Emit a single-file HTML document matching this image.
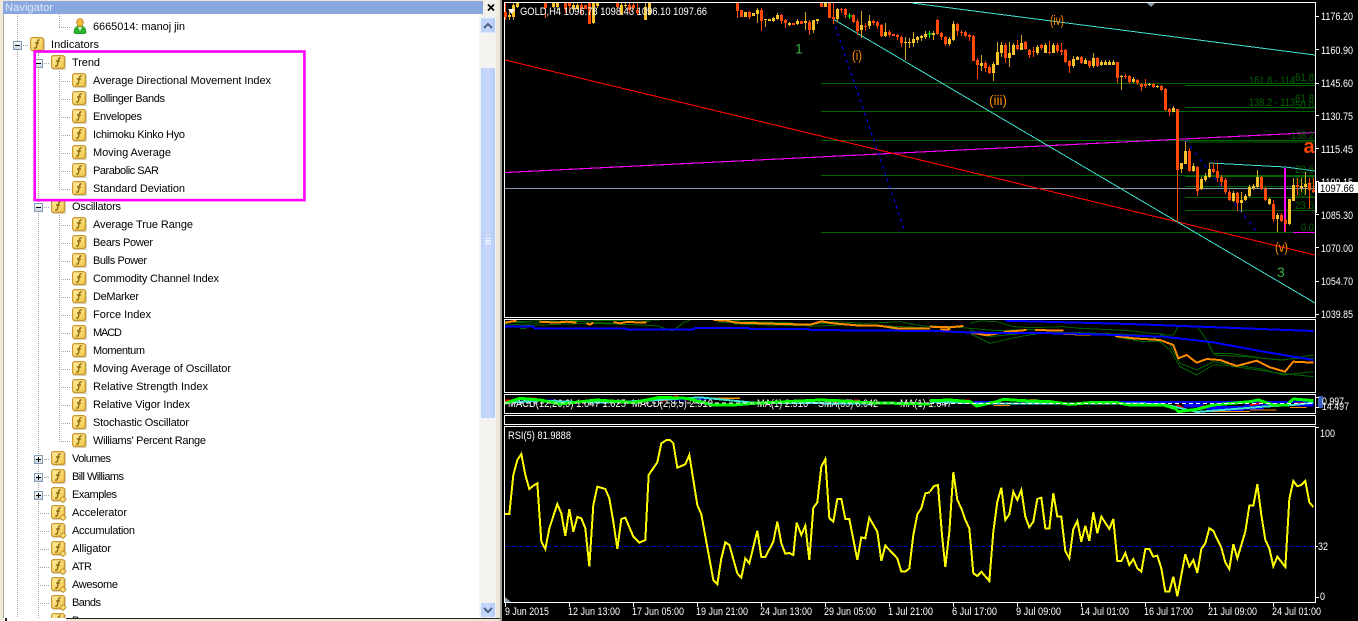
<!DOCTYPE html>
<html><head><meta charset="utf-8"><title>Navigator and GOLD,H4 chart</title>
<style>
html,body{margin:0;padding:0;background:#000;width:1358px;height:621px;overflow:hidden}
svg{display:block;position:absolute;left:0;top:0}
text{font-family:"Liberation Sans",sans-serif;font-size:11px}
.t text{fill:#000}
.w text{fill:#fff}
.g text{fill:#006400}
.o text{fill:#ff8c00;font-size:14px}
.c{shape-rendering:crispEdges;fill:none}
</style></head><body>
<svg width="1358" height="621" viewBox="0 0 1358 621" xmlns="http://www.w3.org/2000/svg">
<defs>
<linearGradient id="gy" x1="0" y1="0" x2="1" y2="1"><stop offset="0" stop-color="#fff0a0"/><stop offset="1" stop-color="#f2c648"/></linearGradient>
<linearGradient id="gb" x1="0" y1="0" x2="0" y2="1"><stop offset="0" stop-color="#fff"/><stop offset="1" stop-color="#c9cfd8"/></linearGradient>
<linearGradient id="sb" x1="0" y1="0" x2="1" y2="0"><stop offset="0" stop-color="#bcd0fa"/><stop offset=".5" stop-color="#c8d8fb"/><stop offset="1" stop-color="#b4c9f5"/></linearGradient>
<symbol id="f" width="17" height="17" overflow="visible">
<rect x="1" y="1" width="14" height="14" rx="2" fill="#d8d2c0"/>
<rect x=".6" y=".6" width="12.800" height="12.800" rx="2" fill="url(#gy)" stroke="#c8952e" stroke-width="1.200"/>
<path d="M9.800 3C8 2.600 7.600 3.600 7.300 5.200L6.500 9.600C6.200 11.300 5.400 11.400 4.100 10.900M5 6H9" fill="none" stroke="#8f6d18" stroke-width="1.400"/>
</symbol>
<symbol id="d" width="17" height="17" overflow="visible">
<use href="#f"/>
<path d="M12 9.500l3 3-3 3-3-3z" fill="#fde27a" stroke="#c8952e"/>
</symbol>
<symbol id="m" width="9" height="9"><rect x=".5" y=".5" width="8" height="8" fill="url(#gb)" stroke="#7f9db9"/><path d="M2 4.500H7" stroke="#000" class="c"/></symbol>
<symbol id="p" width="9" height="9"><rect x=".5" y=".5" width="8" height="8" fill="url(#gb)" stroke="#7f9db9"/><path d="M2 4.500H7M4.500 2V7" stroke="#000" class="c"/></symbol>
<clipPath id="c2"><rect x="505" y="395" width="810" height="18"/></clipPath>
<clipPath id="c1"><rect x="505" y="320" width="810" height="72"/></clipPath>
</defs>

<!-- LEFT PANEL -->
<rect x="0" y="0" width="503" height="621" fill="#ece9d8"/>
<rect x="3" y="14" width="476" height="607" fill="#fff"/>
<rect x="3" y="14" width="1" height="607" fill="#a8a8a0"/>
<rect x="3" y="1" width="480" height="13" fill="#8aa8e0"/>
<rect x="483" y="0" width="14" height="16" fill="#f2f1ea"/>
<text x="5" y="11" fill="#dde7f8" textLength="48" lengthAdjust="spacingAndGlyphs">Navigator</text>
<path d="M488 4.500l6 6M494 4.500l-6 6" stroke="#000" stroke-width="1.700"/>

<!-- tree lines -->
<g class="c" stroke="#a0a0a0" stroke-dasharray="1 1">
<path d="M17.500 14V618M38.500 53V618M59.500 14V27M59.500 71V189M59.500 215V441"/>
<path d="M59 27.500H71M17 45.500H28M38 63.500H49M38 207.500H49M38 459.500H49M38 477.500H49M38 495.500H49M38 513.500H49M38 531.500H49M38 549.500H49M38 567.500H49M38 585.500H49M38 603.500H49"/>
<path d="M59 81.500H71M59 99.500H71M59 117.500H71M59 135.500H71M59 153.500H71M59 171.500H71M59 189.500H71M59 225.500H71M59 243.500H71M59 261.500H71M59 279.500H71M59 297.500H71M59 315.500H71M59 333.500H71M59 351.500H71M59 369.500H71M59 387.500H71M59 405.500H71M59 423.500H71M59 441.500H71"/>
</g>
<use href="#m" x="13" y="41"/><use href="#m" x="34" y="59"/><use href="#m" x="34" y="203"/>
<use href="#p" x="34" y="455"/><use href="#p" x="34" y="473"/><use href="#p" x="34" y="491"/>

<!-- account icon -->
<path d="M74 33c0-5 2-7 6-7s6 2 6 7c-3 1-9 1-12 0z" fill="#2fb52f" stroke="#1c8a1c" stroke-width=".7"/>
<ellipse cx="80" cy="22.500" rx="3.300" ry="4" fill="#f3b93a" stroke="#b8801c" stroke-width=".8"/>
<path d="M78 27l2 4 2-4" fill="#e6f5e0"/>

<!-- icons -->
<use href="#f" x="30" y="37"/>
<use href="#f" x="51" y="55"/><use href="#f" x="51" y="199"/><use href="#f" x="51" y="451"/><use href="#f" x="51" y="469"/>
<use href="#d" x="51" y="487"/><use href="#d" x="51" y="505"/><use href="#d" x="51" y="523"/><use href="#d" x="51" y="541"/><use href="#d" x="51" y="559"/><use href="#d" x="51" y="577"/><use href="#d" x="51" y="595"/><use href="#d" x="51" y="613"/>
<use href="#f" x="72" y="73"/><use href="#f" x="72" y="91"/><use href="#f" x="72" y="109"/><use href="#f" x="72" y="127"/><use href="#f" x="72" y="145"/><use href="#f" x="72" y="163"/><use href="#f" x="72" y="181"/>
<use href="#f" x="72" y="217"/><use href="#f" x="72" y="235"/><use href="#f" x="72" y="253"/><use href="#f" x="72" y="271"/><use href="#f" x="72" y="289"/><use href="#f" x="72" y="307"/><use href="#f" x="72" y="325"/><use href="#f" x="72" y="343"/><use href="#f" x="72" y="361"/><use href="#f" x="72" y="379"/><use href="#f" x="72" y="397"/><use href="#f" x="72" y="415"/><use href="#f" x="72" y="433"/>

<!-- tree text -->
<g class="t">
<text x="93" y="30" textLength="92">6665014: manoj jin</text>
<text x="51" y="48" textLength="48">Indicators</text>
<text x="72" y="66" textLength="28">Trend</text>
<text x="93" y="84" textLength="178">Average Directional Movement Index</text>
<text x="93" y="102" textLength="72">Bollinger Bands</text>
<text x="93" y="120" textLength="49">Envelopes</text>
<text x="93" y="138" textLength="92">Ichimoku Kinko Hyo</text>
<text x="93" y="156" textLength="78">Moving Average</text>
<text x="93" y="174" textLength="66">Parabolic SAR</text>
<text x="93" y="192" textLength="92">Standard Deviation</text>
<text x="72" y="210" textLength="49">Oscillators</text>
<text x="93" y="228" textLength="100">Average True Range</text>
<text x="93" y="246" textLength="60">Bears Power</text>
<text x="93" y="264" textLength="54">Bulls Power</text>
<text x="93" y="282" textLength="126">Commodity Channel Index</text>
<text x="93" y="300" textLength="46">DeMarker</text>
<text x="93" y="318" textLength="58">Force Index</text>
<text x="93" y="336" textLength="29">MACD</text>
<text x="93" y="354" textLength="52">Momentum</text>
<text x="93" y="372" textLength="138">Moving Average of Oscillator</text>
<text x="93" y="390" textLength="115">Relative Strength Index</text>
<text x="93" y="408" textLength="97">Relative Vigor Index</text>
<text x="93" y="426" textLength="96">Stochastic Oscillator</text>
<text x="93" y="444" textLength="113">Williams' Percent Range</text>
<text x="72" y="462" textLength="39">Volumes</text>
<text x="72" y="480" textLength="52">Bill Williams</text>
<text x="72" y="498" textLength="45">Examples</text>
<text x="72" y="516" textLength="55">Accelerator</text>
<text x="72" y="534" textLength="63">Accumulation</text>
<text x="72" y="552" textLength="39">Alligator</text>
<text x="72" y="570" textLength="20">ATR</text>
<text x="72" y="588" textLength="46">Awesome</text>
<text x="72" y="606" textLength="29">Bands</text>
<text x="72" y="624" textLength="27">Bears</text>
</g>
<!-- magenta box -->
<rect x="34.700" y="51.500" width="269.700" height="148.600" fill="none" stroke="#ff00ff" stroke-width="2.600"/>

<!-- bottom strip -->
<rect x="3" y="618" width="63" height="3" fill="#fff"/>
<rect x="66" y="619" width="434" height="2" fill="#ece9d8"/>
<rect x="66" y="618" width="434" height="1" fill="#222"/>
<rect x="5" y="618" width="2" height="3" fill="#222"/>

<!-- scrollbar -->
<rect x="479" y="14" width="17" height="604" fill="#f4f3ee"/>
<rect x="480.500" y="17.500" width="15" height="15.500" rx="2" fill="url(#sb)" stroke="#eef3fd"/>
<path d="M484 28l4-4 4 4" fill="none" stroke="#4d6185" stroke-width="2"/>
<rect x="480.500" y="67.500" width="15" height="351" rx="2" fill="url(#sb)" stroke="#eef3fd"/>
<path class="c" d="M485 238.500h6M485 240.500h6M485 242.500h6M485 244.500h6" stroke="#eef3fd"/>
<rect x="480.500" y="602.500" width="15" height="15" rx="2" fill="url(#sb)" stroke="#eef3fd"/>
<path d="M484 608l4 4 4-4" fill="none" stroke="#4d6185" stroke-width="2"/>
<!-- splitter -->
<rect x="500" y="0" width="2" height="621" fill="#a0a09a"/>
<rect x="502" y="0" width="856" height="621" fill="#000"/>

<!-- CHART FRAMES -->
<g fill="#fff">
<rect x="504" y="2" width="812" height="1"/>
<rect x="504" y="2" width="1" height="601"/>
<rect x="1315" y="2" width="1" height="601"/>
<rect x="504" y="317" width="812" height="1"/>
<rect x="504" y="319" width="812" height="1"/>
<rect x="504" y="392" width="812" height="1"/>
<rect x="504" y="394" width="812" height="1"/>
<rect x="504" y="413" width="812" height="1"/>
<rect x="504" y="415" width="812" height="1"/>
<rect x="504" y="424" width="812" height="1"/>
<rect x="504" y="426" width="812" height="1"/>
<rect x="504" y="602" width="812" height="1"/>
</g>
<rect x="504" y="318" width="1" height="1" fill="#000"/>
<rect x="504" y="393" width="1" height="1" fill="#000"/>
<rect x="504" y="414" width="1" height="1" fill="#000"/>
<rect x="504" y="425" width="1" height="1" fill="#000"/>
<rect x="1315" y="318" width="1" height="1" fill="#000"/>
<rect x="1315" y="393" width="1" height="1" fill="#000"/>
<rect x="1315" y="414" width="1" height="1" fill="#000"/>
<rect x="1315" y="425" width="1" height="1" fill="#000"/>

<!-- MAIN CHART lines -->
<g class="c">
<path d="M505 188.500H1315" stroke="#8899aa"/>
<path stroke="#006400" d="M821 83.500H1315M821 111.500H1315M821 140.500H1315M821 175.500H1315M821 232.500H1315M1185 85.500H1315M1185 107.500H1315M1185 142H1315M1185 176.500H1315M1185 186.500H1315M1185 197.500H1315M1185 210.500H1315"/>
<path d="M505 172.500L1315 132.500" stroke="#ff00ff" stroke-width="1.100"/>
<path d="M1293 232.500H1315" stroke="#ff00ff"/>
<path d="M1285 168V232" stroke="#ff00ff" stroke-width="2"/>
<path d="M505 60L1315 255" stroke="#ff0000" stroke-width="1.100"/>
<path d="M912 3L1315 55" stroke="#40e0d0"/>
<path d="M833 19L1315 303" stroke="#40e0d0"/>
<path d="M1210 163L1285 167L1293 168L1315 171" stroke="#40e0d0"/>
<path d="M833 20L905 232" stroke="#0000ff" stroke-width="1.100" stroke-dasharray="3 4"/>
<path d="M1185 140L1257 232" stroke="#0000ff" stroke-dasharray="3 5"/>
</g>

<!-- fib labels -->
<g class="g">
<text x="1249" y="84" textLength="46" lengthAdjust="spacingAndGlyphs">161.8 - 114</text>
<text x="1295" y="81" textLength="19" lengthAdjust="spacingAndGlyphs">61.8</text>
<text x="1249" y="106" textLength="46" lengthAdjust="spacingAndGlyphs">138.2 - 113</text>
<text x="1295" y="102" textLength="19" lengthAdjust="spacingAndGlyphs">61.8</text>
<text x="1295" y="109" textLength="19" lengthAdjust="spacingAndGlyphs">50.0</text>
<text x="1291" y="139" textLength="23" lengthAdjust="spacingAndGlyphs">138.2</text>
<text x="1295" y="173" textLength="19" lengthAdjust="spacingAndGlyphs">23.6</text>
<text x="1295" y="184" textLength="19" lengthAdjust="spacingAndGlyphs">50.0</text>
<text x="1295" y="197" textLength="19" lengthAdjust="spacingAndGlyphs">38.2</text>
<text x="1295" y="209" textLength="19" lengthAdjust="spacingAndGlyphs">23.6</text>
<text x="1301" y="231" textLength="13" lengthAdjust="spacingAndGlyphs">0.0</text>
</g>

<!-- candles: wicks -->
<g class="c">
<path stroke="#ff4500" d="M505.500 3V20M545.500 3V18M565.500 3V13M569.500 3V13M581.500 3V14M589.500 3V24M617.500 3V8M629.500 3V13M633.500 3V10M637.500 3V15M737.500 3V18M749.500 11V19M761.500 8V31M781.500 14V24M785.500 19V28M809.500 20V35M821.500 3V7M829.500 3V18M833.500 3V24M841.500 8V13M845.500 8V18M853.500 14V23M857.500 19V35M865.500 23V31M873.500 20V25M877.500 21V29M881.500 24V37M889.500 30V37M897.500 34V40M901.500 36V47M937.500 19V35M941.500 32V40M945.500 36V46M957.500 23V36M961.500 30V36M965.500 31V37M969.500 34V41M973.500 35V61M977.500 58V79M985.500 61V72M989.500 65V74M1005.500 43V63M1017.500 40V50M1025.500 41V50M1029.500 49V58M1033.500 47V57M1041.500 44V50M1049.500 41V54M1057.500 43V53M1061.500 43V55M1065.500 49V63M1069.500 60V73M1081.500 56V64M1089.500 60V68M1097.500 57V67M1117.500 62V83M1125.500 74V79M1129.500 75V84M1137.500 79V85M1141.500 83V91M1145.500 79V88M1153.500 83V88M1161.500 85V91M1165.500 88V111M1169.500 108V116M1177.500 109V222M1189.500 148V172M1197.500 166V196M1213.500 163V173M1217.500 163V182M1221.500 175V186M1225.500 178V194M1229.500 190V201M1237.500 192V211M1261.500 176V190M1265.500 187V201M1273.500 200V222M1281.500 213V222M1285.500 218V232M1297.500 178V195M1309.500 178V209M1313.500 178V193"/>
<path stroke="#d2a52a" d="M509.500 10V20M513.500 3V20M517.500 3V8M553.500 3V8M557.500 3V10M573.500 3V10M577.500 3V10M593.500 3V24M597.500 3V8M621.500 3V15M625.500 3V8M645.500 3V20M649.500 3V15M757.500 8V23M765.500 19V27M773.500 17V22M777.500 13V20M789.500 22V26M797.500 19V25M805.500 12V30M813.500 20V33M817.500 19V24M825.500 3V7M837.500 8V22M861.500 11V38M869.500 15V29M885.500 23V37M905.500 37V60M909.500 38V48M913.500 32V47M917.500 36V43M921.500 35V41M925.500 31V39M933.500 31V40M949.500 37V46M953.500 21V41M981.500 55V71M993.500 62V81M997.500 42V65M1001.500 42V57M1009.500 42V67M1013.500 43V55M1021.500 35V50M1037.500 45V55M1045.500 43V53M1053.500 43V53M1073.500 56V68M1077.500 56V60M1085.500 58V64M1093.500 53V68M1101.500 60V66M1105.500 60V65M1109.500 60V65M1113.500 60V65M1121.500 75V90M1133.500 77V83M1149.500 83V86M1157.500 85V88M1173.500 106V112M1181.500 163V173M1185.500 141V164M1193.500 163V172M1201.500 177V190M1205.500 173V182M1209.500 163V178M1233.500 191V202M1241.500 192V212M1245.500 194V201M1249.500 185V197M1253.500 184V190M1257.500 170V188M1269.500 198V205M1277.500 213V232M1289.500 199V225M1293.500 178V201M1301.500 178V192M1305.500 172V195"/>
<path stroke="#00ff00" d="M849.500 13V19M847.500 16H852M929.500 31V38M927.500 34H932"/>
</g>
<!-- candles: bodies -->
<g class="c" stroke-width="3">
<path stroke="#ff4a0a" d="M505.500 12V17M545.500 3V8M565.500 3V9M569.500 3V6M581.500 5V9M585.500 5V9M589.500 3V24M617.500 3V7M629.500 5V10M633.500 5V8M637.500 10V13M737.500 3V11M741.500 10V17M749.500 12V17M761.500 10V21M781.500 15V21M785.500 20V23M793.500 23V25M801.500 21V24M809.500 22V30M821.500 3V7M829.500 3V18M833.500 17V19M841.500 9V10M845.500 9V15M853.500 15V22M857.500 21V31M865.500 26V27M873.500 21V23M877.500 22V26M881.500 25V36M889.500 32V35M893.500 34V36M897.500 35V37M901.500 37V43M937.500 20V34M941.500 33V37M945.500 37V44M957.500 24V31M961.500 32V33M965.500 32V36M969.500 35V37M973.500 36V61M977.500 60V65M985.500 63V68M989.500 67V73M1005.500 45V58M1017.500 45V49M1025.500 42V49M1029.500 50V55M1033.500 51V52M1041.500 45V48M1049.500 52V53M1057.500 45V51M1061.500 50V52M1065.500 50V62M1069.500 61V66M1081.500 57V63M1089.500 61V66M1097.500 58V66M1117.500 62V78M1125.500 76V77M1129.500 76V82M1137.500 80V83M1141.500 84V87M1145.500 84V86M1153.500 84V87M1161.500 86V90M1165.500 89V110M1169.500 109V112M1177.500 109V170M1189.500 151V171M1197.500 167V191M1213.500 169V172M1217.500 171V178M1221.500 177V182M1225.500 180V192M1229.500 192V200M1237.500 193V203M1261.500 177V189M1265.500 189V200M1273.500 204V219M1281.500 215V221M1285.500 220V224M1297.500 185V187M1309.500 183V190M1313.500 190V192"/>
<path stroke="#f9c22a" d="M509.500 15V17M513.500 5V17M517.500 3V7M553.500 3V7M557.500 3V7M573.500 5V9M577.500 5V9M593.500 3V23M597.500 3V6M621.500 5V15M625.500 5V6M645.500 7V20M649.500 3V15M745.500 12V17M753.500 13V16M757.500 10V14M765.500 19V20M769.500 19V21M773.500 18V21M777.500 15V19M789.500 23V25M797.500 21V24M805.500 21V23M813.500 20V30M817.500 19V21M825.500 3V7M837.500 9V19M861.500 25V30M869.500 21V26M885.500 32V36M905.500 42V43M909.500 42V43M913.500 39V43M917.500 37V40M921.500 36V38M925.500 34V37M933.500 33V35M949.500 39V44M953.500 24V40M981.500 63V66M993.500 64V73M997.500 52V65M1001.500 45V53M1009.500 53V58M1013.500 45V55M1021.500 43V50M1037.500 47V53M1045.500 45V53M1053.500 45V53M1073.500 59V66M1077.500 57V60M1085.500 60V64M1093.500 58V66M1101.500 62V65M1105.500 62V65M1109.500 62V65M1113.500 62V65M1121.500 76V77M1133.500 79V82M1149.500 84V85M1157.500 86V87M1173.500 108V112M1181.500 163V169M1185.500 151V164M1193.500 166V171M1201.500 179V189M1205.500 176V180M1209.500 169V177M1233.500 193V201M1241.500 200V203M1245.500 196V200M1249.500 187V196M1253.500 186V188M1257.500 177V187M1269.500 199V204M1277.500 215V219M1289.500 199V224M1293.500 185V201M1301.500 186V188M1305.500 184V187"/>
</g>

<!-- markers -->
<path d="M508 9h7l-3.500 5z" fill="#fff"/>
<path d="M1147 3h8l-4 4z" fill="#8899aa"/>
<!-- header label -->
<g class="w"><text x="520" y="15" textLength="187" lengthAdjust="spacingAndGlyphs">GOLD,H4  1096.78 1098.43 1096.10 1097.66</text></g>
<!-- wave labels -->
<text x="795" y="53.500" fill="#3cb043" style="font-size:14px">1</text>
<g class="o">
<text x="852" y="60" textLength="10" lengthAdjust="spacingAndGlyphs">(i)</text>
<text x="989" y="105" textLength="18" lengthAdjust="spacingAndGlyphs">(iii)</text>
<text x="1050" y="25" textLength="14" lengthAdjust="spacingAndGlyphs">(iv)</text>
<text x="1275" y="252" textLength="13" lengthAdjust="spacingAndGlyphs">(v)</text>
</g>
<text x="1277" y="277" fill="#3cb043" style="font-size:14px">3</text>
<text x="1303.500" y="153" fill="#ff4500" font-weight="bold" style="font-size:20px">a</text>

<!-- price axis -->
<g fill="#fff">
<rect x="1316" y="16" width="3" height="1"/><rect x="1316" y="49" width="3" height="1"/><rect x="1316" y="83" width="3" height="1"/><rect x="1316" y="115" width="3" height="1"/><rect x="1316" y="148" width="3" height="1"/><rect x="1316" y="181" width="3" height="1"/><rect x="1316" y="214" width="3" height="1"/><rect x="1316" y="247" width="3" height="1"/><rect x="1316" y="281" width="3" height="1"/><rect x="1316" y="314" width="3" height="1"/>
<rect x="1315" y="182" width="2" height="31"/>
</g>
<g class="w">
<text x="1321" y="20" textLength="32" lengthAdjust="spacingAndGlyphs">1176.20</text>
<text x="1321" y="54" textLength="32" lengthAdjust="spacingAndGlyphs">1160.90</text>
<text x="1321" y="87" textLength="32" lengthAdjust="spacingAndGlyphs">1145.60</text>
<text x="1321" y="120" textLength="32" lengthAdjust="spacingAndGlyphs">1130.75</text>
<text x="1321" y="153" textLength="32" lengthAdjust="spacingAndGlyphs">1115.45</text>
<text x="1321" y="186" textLength="32" lengthAdjust="spacingAndGlyphs">1100.15</text>
<text x="1321" y="219" textLength="32" lengthAdjust="spacingAndGlyphs">1085.30</text>
<text x="1321" y="252" textLength="32" lengthAdjust="spacingAndGlyphs">1070.00</text>
<text x="1321" y="285" textLength="32" lengthAdjust="spacingAndGlyphs">1054.70</text>
<text x="1321" y="318" textLength="32" lengthAdjust="spacingAndGlyphs">1039.85</text>
</g>
<rect x="1318" y="182" width="40" height="11" fill="#fff"/>
<text x="1320" y="192" fill="#000" textLength="34" lengthAdjust="spacingAndGlyphs">1097.66</text>

<!-- SUB WINDOW 1 -->
<g clip-path="url(#c1)">
<g transform="translate(500 310) scale(.33333)" class="c">
<g stroke="#006400" stroke-width="3">
<polyline points="15,35 100,40 160,35 250,30 330,32 400,30 480,30"/>
<polyline points="60,55 80,55"/>
<polyline points="480,50 510,62 520,62 550,38 570,30"/>
<polyline points="640,32 690,30 760,35 860,38 930,45 1000,35 1100,40 1200,35 1250,45 1290,50"/>
<polyline points="15,42 100,46 200,42 270,40 400,44 480,48"/>
<polyline points="700,42 860,46 950,48 1050,44 1150,50 1220,65"/>
<polyline points="15,36 120,33 250,35 340,40 450,34"/>
<polyline points="650,36 780,42 900,42 1000,40 1120,46 1290,54"/>
</g>
<polyline stroke="#ff8c00" stroke-width="6" points="15,38 50,32"/>
<polyline stroke="#ff8c00" stroke-width="6" points="118,35 170,38 200,35 230,38"/>
<polyline stroke="#ff8c00" stroke-width="6" points="260,40 270,44 280,38"/>
<polyline stroke="#ff8c00" stroke-width="6" points="340,36 360,40 380,36 440,38"/>
<polyline stroke="#ff8c00" stroke-width="6" points="640,30 680,32 710,38 780,40 850,42 930,44 965,34 1000,40 1070,46 1130,46 1200,56 1290,56"/>
<polyline stroke="#0000ff" stroke-width="6" points="15,49 100,50 104,55 375,55 380,58 580,58 585,54 745,54 750,57 925,57 930,60 1290,63"/>
</g>
<g transform="translate(930 310) scale(.33333)" class="c">
<g stroke="#006400" stroke-width="3">
<polyline points="120,40 150,33 200,35 250,50 300,53 400,50 450,55 520,58 600,62 660,70 700,72"/>
<polyline points="120,60 180,80 230,75 280,70 350,68 450,68 560,72 640,75 680,85"/>
<polyline points="120,70 150,85 180,100 230,88 280,78 320,72"/>
<polyline points="560,82 640,95 690,95 720,120 750,170 800,195 850,165 880,165 950,175 1050,190 1150,200"/>
<polyline points="690,75 730,75 745,50 800,48 830,90 850,130 900,130 1000,145 1060,150 1150,135"/>
<polyline points="720,105 750,160 800,180 850,155 950,170 1000,178 1060,195 1150,185"/>
<polyline points="850,135 950,140 1050,150 1100,145 1150,145"/>
<polyline points="0,48 60,50 120,55 200,62 260,60 330,58 400,62"/>
</g>
<g stroke="#ff8c00" stroke-width="6">
<polyline points="0,50 60,52 100,48"/>
<polyline points="30,58 60,58"/>
<polyline points="125,68 170,76 205,70"/>
<polyline points="220,66 290,60"/>
<polyline points="315,60 400,62"/>
<polyline points="400,72 490,74"/>
<polyline points="555,78 610,85 690,90 730,105 745,145 770,135 800,158 830,147 870,150 920,168 980,152 1020,172 1065,185 1090,155 1150,158"/>
</g>
<polyline stroke="#0000ff" stroke-width="6" points="0,62 130,68 400,70 700,80 850,97 1000,125 1150,150"/>
<polyline stroke="#0000ff" stroke-width="6" points="225,32 600,42 1150,63"/>
</g>
</g>

<!-- SUB WINDOW 2 -->
<g clip-path="url(#c2)">
<g class="w">
<text x="508" y="407" textLength="118" lengthAdjust="spacingAndGlyphs">MACD(12,26,9) 1.047 1.025</text>
<text x="632" y="407" textLength="81" lengthAdjust="spacingAndGlyphs">MACD(2,8,5) 2.910</text>
<text x="757" y="407" textLength="51" lengthAdjust="spacingAndGlyphs">MA(1) 2.916</text>
<text x="818" y="407" textLength="60" lengthAdjust="spacingAndGlyphs">SMA(55) 0.042</text>
<text x="900" y="407" textLength="52" lengthAdjust="spacingAndGlyphs">MA(1) 1.047</text>
</g>
<g transform="translate(500 310) scale(.33333)" class="c">
<path stroke="#ff0000" stroke-width="6" d="M15 272H40M90 266H105M480 272H500M520 260H535M540 268H580M650 285H660M960 272H980M1060 272H1075"/>
<path stroke="#0000ff" stroke-width="6" d="M120 272H160M495 268H560M590 265H640"/>
<path stroke="#ff8c00" stroke-width="4" d="M640 265H720"/>
<polyline stroke="#40e0d0" stroke-width="6" points="15,278 120,272 300,278 480,270 600,262 700,272 760,278 1000,280 1290,282"/>
<polyline stroke="#00ff00" stroke-width="9" points="15,280 60,265 120,270 180,282 290,270 400,278 480,262 560,265 640,285 700,285 760,280 960,270 1010,272 1100,278 1290,282"/>
<path stroke="#fff" stroke-width="3" stroke-dasharray="12 9" d="M15 279H1290"/>
</g>
<g transform="translate(930 310) scale(.33333)" class="c">
<path stroke="#0000ff" stroke-width="6" d="M130 276H200M560 276H1150"/>
<path style="fill:#0000ff" stroke="none" d="M760 280h60v12h-60zM830 288h110v15h-110zM940 284h60v14h-60zM1000 282h60v8h-60zM1100 280h50v10h-50z"/>
<path stroke="#ff8c00" stroke-width="3" d="M190 286H240M810 305H960M960 300H1040M1080 292H1130"/>
<path stroke="#ff0000" stroke-width="6" d="M15 270H35M100 272H120M300 270H320M740 285L760 295M810 292L850 285M960 285L1000 278M1095 280H1125"/>
<polyline stroke="#40e0d0" stroke-width="6" points="0,275 130,280 560,280 700,282 800,306 1000,290 1090,285 1150,278"/>
<polyline stroke="#00ff00" stroke-width="9" points="0,272 60,270 120,275 140,288 200,275 220,268 280,272 360,275 420,283 480,278 560,278 600,285 700,285 735,295 745,305 800,298 850,285 960,275 985,270 1030,285 1070,285 1090,267 1150,272"/>
<path stroke="#fff" stroke-width="3" stroke-dasharray="12 9" d="M0 280H1150"/>
</g>
</g>
<rect x="1318" y="396" width="5" height="12" fill="#3b5fc0"/>
<g class="w">
<text x="1322" y="405" textLength="22" lengthAdjust="spacingAndGlyphs">0.997</text>
<text x="1322" y="410" textLength="27" lengthAdjust="spacingAndGlyphs">14.497</text>
</g>
<g fill="#fff"><rect x="1316" y="397" width="3" height="1"/><rect x="1316" y="407" width="3" height="1"/><rect x="1316" y="427" width="3" height="1"/><rect x="1316" y="546" width="2" height="1"/><rect x="1316" y="597" width="3" height="1"/></g>

<!-- RSI -->
<path class="c" d="M505 546.500H1315" stroke="#0000c8" stroke-dasharray="4 3"/>
<g class="w"><text x="508" y="439" textLength="63" lengthAdjust="spacingAndGlyphs">RSI(5) 81.9888</text>
<text x="1320" y="437" textLength="15" lengthAdjust="spacingAndGlyphs">100</text>
<text x="1318" y="550" textLength="10" lengthAdjust="spacingAndGlyphs">32</text>
<text x="1320" y="600" textLength="5" lengthAdjust="spacingAndGlyphs">0</text></g>
<g class="c" stroke="#ffff00" stroke-width="6">
<polyline transform="translate(500 425) scale(.33333)" points="15,267 28,267 40,150 52,105 64,87 76,150 88,192 100,182 112,175 124,350 136,372 148,310 172,237 184,265 196,333 208,252 220,320 232,276 244,280 256,310 268,424 280,240 292,185 316,192 328,220 340,290 352,372 364,282 376,278 400,335 418,353 436,345 446,150 472,112 484,55 500,45 510,45 520,55 532,128 556,118 568,90 592,240 604,268 640,465 652,478 664,400 676,352 688,360 712,445 724,458 736,400 748,415 772,317 784,396 796,396 820,350 832,290 844,355 856,386 868,384 880,390 890,293 904,330 916,302 928,405 940,248 952,232 964,125 976,102 988,280 1000,290 1012,222 1024,222 1036,282 1048,282 1072,405 1084,337 1096,340 1108,278 1132,320 1144,408 1156,362 1192,400 1204,440 1216,440 1228,430 1240,330 1252,268 1264,250 1276,205 1290,202"/>
<polyline transform="translate(930 425) scale(.33333)" points="0,200 12,183 24,180 36,330 46,426 58,320 70,142 82,225 94,250 106,285 118,310 130,445 142,453 154,440 178,468 190,320 202,230 214,188 226,285 238,268 250,200 262,225 274,195 286,275 298,307 310,290 322,222 334,218 346,310 358,310 370,205 382,275 394,275 406,378 418,400 430,312 442,288 454,350 466,302 478,348 490,262 502,325 514,275 538,312 550,282 562,408 574,408 586,384 598,420 610,402 622,430 634,440 646,372 658,372 670,395 682,392 694,430 706,500 718,500 730,455 742,514 754,450 766,388 778,425 790,405 802,444 814,372 826,355 838,310 850,318 874,368 886,412 898,432 910,358 922,400 946,320 958,242 970,242 982,178 994,270 1006,345 1018,370 1030,424 1042,395 1066,426 1078,222 1090,168 1102,184 1114,180 1126,168 1138,232 1150,246"/>
</g>
<path d="M505 597l6 5h-6z" fill="#8899aa"/>

<!-- time axis -->
<path class="c" stroke="#fff" d="M505.500 603v4M569.500 603v4M633.500 603v4M697.500 603v4M761.500 603v4M825.500 603v4M889.500 603v4M953.500 603v4M1017.500 603v4M1081.500 603v4M1145.500 603v4M1209.500 603v4M1273.500 603v4"/>
<g class="w">
<text x="505" y="615" textLength="44" lengthAdjust="spacingAndGlyphs">9 Jun 2015</text>
<text x="568" y="615" textLength="52" lengthAdjust="spacingAndGlyphs">12 Jun 13:00</text>
<text x="632" y="615" textLength="52" lengthAdjust="spacingAndGlyphs">17 Jun 05:00</text>
<text x="696" y="615" textLength="52" lengthAdjust="spacingAndGlyphs">19 Jun 21:00</text>
<text x="760" y="615" textLength="52" lengthAdjust="spacingAndGlyphs">24 Jun 13:00</text>
<text x="824" y="615" textLength="52" lengthAdjust="spacingAndGlyphs">29 Jun 05:00</text>
<text x="888" y="615" textLength="45" lengthAdjust="spacingAndGlyphs">1 Jul 21:00</text>
<text x="952" y="615" textLength="45" lengthAdjust="spacingAndGlyphs">6 Jul 17:00</text>
<text x="1016" y="615" textLength="45" lengthAdjust="spacingAndGlyphs">9 Jul 09:00</text>
<text x="1080" y="615" textLength="49" lengthAdjust="spacingAndGlyphs">14 Jul 01:00</text>
<text x="1144" y="615" textLength="49" lengthAdjust="spacingAndGlyphs">16 Jul 17:00</text>
<text x="1208" y="615" textLength="49" lengthAdjust="spacingAndGlyphs">21 Jul 09:00</text>
<text x="1272" y="615" textLength="49" lengthAdjust="spacingAndGlyphs">24 Jul 01:00</text>
</g>
</svg>
</body></html>
